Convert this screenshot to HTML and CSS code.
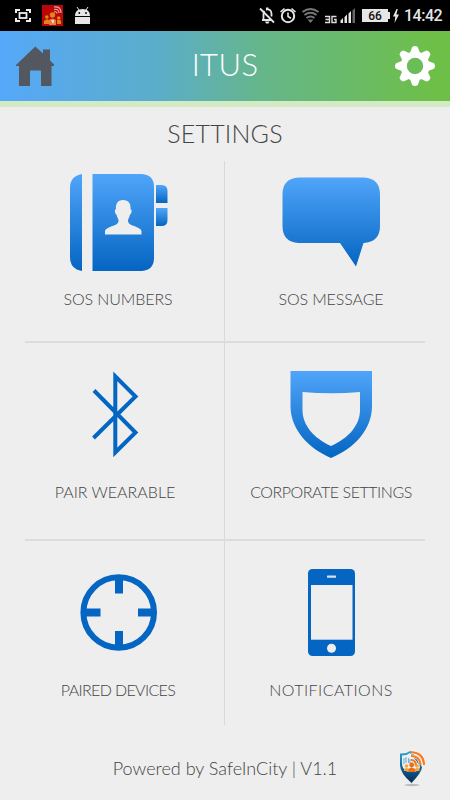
FILE: index.html
```html
<!DOCTYPE html>
<html lang="en">
<head>
    <meta charset="UTF-8">
    <meta name="viewport" content="width=device-width, initial-scale=1.0">
    <title>ITUS - Settings</title>
    <link rel="stylesheet" href="styles.css">
</head>
<body>
    <div class="statusbar">
        <svg class="notifications" width="78" height="31" viewBox="14 0 78 31">
            <path d="M16 13v-3h4M26 10h4v3M16 18v3h4M26 21h4v-3" fill="none" stroke="#eee" stroke-width="2"/>
            <rect x="19.5" y="13" width="7" height="5" fill="none" stroke="#eee" stroke-width="1.8"/>
            <rect x="42" y="5" width="21" height="21" fill="#bd0505"/>
            <g fill="#d8861d">
                <circle cx="52.5" cy="15" r="2.7"/>
                <circle cx="46.8" cy="17" r="1.8"/>
                <circle cx="58.7" cy="18" r="1.8"/>
                <path d="M44 24v-3q3-3 5-1v4zM57 24v-4q3-1 4 1v3z"/>
            </g>
            <path d="M49 25v-5q3.5-3 7 0v5z" fill="#e67b3b"/>
            <path d="M51 20l3 0v2l-1 2zM52 19.500l3 2" fill="#f8d8c8"/>
            <path d="M54 12q3-1 3 1.500M54 9.500q5-1 5 3.500M54 7q7-1 7 6" fill="none" stroke="#e9b5b5" stroke-width="1.100"/>
            <path d="M75 16q0-7 7.500-7t7.500 7zM75 17h15v7H75z" fill="#e6e6e6"/>
            <path d="M77 7l2 3M88 7l-2 3" stroke="#e6e6e6" stroke-width="1"/>
            <circle cx="79.300" cy="13" r=".9"/>
            <circle cx="86" cy="13" r=".9"/>
        </svg>
        <div class="system">
            <svg width="98" height="31" viewBox="260 0 98 31">
                <path d="M263 20h9M264.500 19v-5q0-2 1-3M267 9.500q5-1 5.500 4v3" fill="none" stroke="#e6e6e6" stroke-width="1.800"/>
                <path d="M261 8.500l14 14" stroke="#e6e6e6" stroke-width="1.800"/>
                <path d="M266 21.500h4.500l-1 2h-2.500zM267 7.500h2.500v2H267z" fill="#e6e6e6"/>
                <circle cx="289" cy="16" r="6.200" fill="none" stroke="#e6e6e6" stroke-width="2"/>
                <path d="M289 12.500v4l3 1.800M281.500 12l4-3.500M296.500 12l-4-3.500" fill="none" stroke="#e6e6e6" stroke-width="1.600"/>
                <path d="M303.500 12q8-6 16 0M305.500 15q6-4.500 12 0M307.500 18q4-3 8 0" fill="none" stroke="#777" stroke-width="2"/>
                <path d="M308.500 19.500h6l-3 3.500z" fill="#777"/>
                <path d="M326 16.500h4.500v6H326M326.500 19.500h4M337.500 16.500H333v6h4v-3h-2" fill="none" stroke="#ddd" stroke-width="1.400"/>
                <path d="M341.500 20.500l2.500-2.500v5h-2.500zM345.500 17l2.500-2.500V23h-2.500zM349.500 13.500L352 11v12h-2.500z" fill="#e6e6e6"/>
                <path d="M353.500 10.500L356 8v15h-2.500z" fill="#666"/>
            </svg>
            <span class="battery">66</span>
            <svg class="bolt" width="6" height="14" viewBox="0 0 6 14">
                <path d="M3.500 0L0 7.500h2.300L1.500 14 6 5.500H3.300L4.800 0z" fill="#e6e6e6"/>
            </svg>
            <span class="clock">14:42</span>
        </div>
    </div>

    <header>
        <svg class="home" width="40" height="40" viewBox="0 0 40 40">
            <path d="M20.300 .5l7.700 7V3.500h7v11l4 4v1.500h-2.500v20H26V24.500H15V40H4V20H1v-1z" fill="#53575f"/>
        </svg>
        <h1>ITUS</h1>
        <svg class="gear" width="40" height="40" viewBox="-20 -20 40 40">
            <g fill="#fff">
                <path id="tooth" d="M-5-13L-2.800-19Q0-21 2.800-19L5-13V13L2.800 19Q0 21-2.800 19L-5 13z"/>
                <use href="#tooth" transform="rotate(45)"/>
                <use href="#tooth" transform="rotate(90)"/>
                <use href="#tooth" transform="rotate(135)"/>
                <circle r="14.500"/>
            </g>
            <circle r="8.200" fill="#6bbd58"/>
        </svg>
    </header>

    <main>
        <h2>SETTINGS</h2>
        <div class="menu">
            <div class="item numbers">
                <svg width="100" height="100" viewBox="0 0 100 100">
                    <defs>
                        <linearGradient id="blue" x1="0" y1="0" x2="0" y2="1">
                            <stop offset="0" stop-color="#50a5f9"/>
                            <stop offset="1" stop-color="#0465c2"/>
                        </linearGradient>
                    </defs>
                    <path d="M14 1v97Q2 96 2 84V15Q2 3 14 1zM24.500 1H74q12 1 12 13v71q0 12-12 13H24.500z" fill="url(#blue)"/>
                    <path d="M88 12h5.500q6 0 6 6v12H88z" fill="url(#blue)"/>
                    <path d="M88 35h11.500v12q0 6-6 6H88z" fill="url(#blue)"/>
                    <path d="M55 27c6 0 8 4 7.500 9 2 1 1 5-.5 5.500-.5 3-2 4-2 6 0 3 2 4 6 5.500 4 1.500 7.500 3 7.500 5.500v3H37v-3c0-2.500 3.500-4 7.500-5.500s6-2.500 6-5.500c0-2-1.500-3-2-6-1.500-.5-2.500-4.500-.5-5.500-.5-5 1.500-9 7-9z" fill="#eee"/>
                </svg>
                <p>SOS NUMBERS</p>
            </div>
            <div class="item right message">
                <svg width="100" height="100" viewBox="0 0 100 100">
                    <path d="M17.500 4.500H83q16 1 16 17V53q0 16-16.500 17L75 93.500 59 70H17.500q-16-1-16-17V21.500q0-16 16-17z" fill="url(#blue)"/>
                </svg>
                <p>SOS MESSAGE</p>
            </div>
            <div class="item pair">
                <svg width="100" height="100" viewBox="0 0 100 100">
                    <path d="M26 25.500l41.500 42L47.300 87.500V11.300L67.500 31.500 25.500 73" fill="none" stroke="#0465c2" stroke-width="4"/>
                </svg>
                <p>PAIR WEARABLE</p>
            </div>
            <div class="item right corporate">
                <svg width="100" height="100" viewBox="0 0 100 100">
                    <path fill-rule="evenodd" d="M9.500 6H91v35c0 23-17 42-41 52C27 83 9.500 64 9.500 41zM21.500 27v18c0 15 11 28 28.500 36 18-8 29-21 29-36V27q-28.500 2.500-57.500 0z" fill="url(#blue)"/>
                </svg>
                <p>CORPORATE SETTINGS</p>
            </div>
            <div class="item paired">
                <svg width="100" height="100" viewBox="0 0 100 100">
                    <circle cx="50.700" cy="49.500" r="35.300" fill="none" stroke="#0465c2" stroke-width="6"/>
                    <path d="M51 13v17.500M51 68v18M14 49.500h18.500M70 49.500h18" stroke="#0465c2" stroke-width="8"/>
                </svg>
                <p>PAIRED DEVICES</p>
            </div>
            <div class="item right notify">
                <svg width="100" height="100" viewBox="0 0 100 100">
                    <rect x="27" y="6" width="47" height="87" rx="4.500" fill="#0465c2"/>
                    <rect x="30" y="22" width="41.500" height="54.700" fill="#eee"/>
                    <rect x="46" y="12.500" width="9" height="2.200" rx=".5" fill="#d5e2ef"/>
                    <circle cx="50.500" cy="85.300" r="4.500" fill="#eee"/>
                </svg>
                <p>NOTIFICATIONS</p>
            </div>
        </div>
    </main>

    <footer>
        <p>Powered by SafeInCity | V1.1</p>
        <svg class="logo" width="28" height="38" viewBox="0 0 28 38">
            <defs>
                <linearGradient id="pin" x1="0" y1="0" x2="0" y2="1">
                    <stop offset="0" stop-color="#35a3d4"/>
                    <stop offset=".6" stop-color="#10588f"/>
                    <stop offset="1" stop-color="#052c55"/>
                </linearGradient>
            </defs>
            <ellipse cx="13" cy="35" rx="7.500" ry="1.200" fill="#bbb"/>
            <path d="M1 3.500Q7 4 11 1l3 2 9 14q0 5-10.500 16Q1 23 1 15z" fill="url(#pin)"/>
            <path d="M3 5.500q5 0 8-2.500l10 13q0 4-4 5.500H8Q3 19 3 13z" fill="#edf3f5"/>
            <path d="M5 8v6M7 7v6M9.500 8v5M11 9v5" stroke="#78b7d4" stroke-width="1.200"/>
            <path d="M12 10q5 0 5 6M12 6q9 0 9.500 9M12 2q13 1 13 13" fill="none" stroke="#fff" stroke-width="3.200"/>
            <path d="M12 10q5 0 5 6M12 6q9 0 9.500 9M12 2q13 1 13 13" fill="none" stroke="#f77b20" stroke-width="2.200"/>
            <g fill="#f8a530">
                <circle cx="7.500" cy="16" r="1.800"/>
                <circle cx="18" cy="16" r="1.800"/>
                <path d="M5 21v-2q2.500-2 5 0v2zM15.500 21v-2q2.500-2 5 0v2z"/>
            </g>
            <circle cx="12.700" cy="15" r="2.400" fill="#ef6b1a"/>
            <path d="M9.500 22v-3q3-3 6.500 0v3z" fill="#ef6b1a"/>
        </svg>
    </footer>
</body>
</html>
```
FILE: styles.css
```css
body {
    margin: 0;
    height: 800px;
    display: flex;
    flex-direction: column;
    background-color: #eee;
    color: #444;
    font-family: Lato, "Open Sans", sans-serif;
    font-weight: 300;
    overflow: hidden;
}
h1, h2, p {
    margin: 0;
    font-weight: 300;
    white-space: nowrap;
}
svg {
    display: block;
    flex-shrink: 0;
}
.statusbar {
    height: 31px;
    display: flex;
    justify-content: space-between;
    padding: 0 7px 0 14px;
    background-color: #000;
    color: #e6e6e6;
    font-family: Roboto, sans-serif;
}
.system {
    display: flex;
    align-items: center;
}
.battery {
    position: relative;
    width: 26px;
    height: 13px;
    margin-left: 5px;
    background-color: #e6e6e6;
    color: #111;
    font-size: 12px;
    font-weight: 500;
    line-height: 14px;
    text-align: center;
}
.battery::after {
    content: "";
    position: absolute;
    left: 26px;
    top: 3px;
    width: 2px;
    height: 7px;
    background-color: #e6e6e6;
}
.bolt {
    margin: 0 5px 0 5px;
}
.clock {
    width: 39px;
    font-size: 16px;
    font-weight: 500;
    line-height: 32px;
    letter-spacing: -0.5px;
}
header {
    height: 70px;
    display: flex;
    align-items: center;
    justify-content: space-between;
    padding: 0 15px;
    background: linear-gradient(to right, #55a8f8, #5badca 35%, #65b68b 58%, #6ebf48 96%);
    border-bottom: 6px solid #d3eac4;
}
h1 {
    color: #fff;
    font-size: 31px;
    line-height: 66px;
    height: 70px;
    letter-spacing: 0.4px;
}
h2 {
    height: 54px;
    font-size: 25px;
    line-height: 52px;
    letter-spacing: 0.2px;
    text-align: center;
}
.menu {
    display: grid;
    grid-template-columns: 200px 200px;
    grid-template-rows: 182px 198px 184px;
    margin-left: 25px;
}
.item {
    box-sizing: border-box;
    display: flex;
    flex-direction: column;
    align-items: center;
    padding: 22px 13px 0 0;
    border-right: 1px solid #d9d9d9;
    border-bottom: 2px solid #dcdcdc;
}
.item.right {
    padding: 22px 0 0 12px;
    border-right: none;
}
.item:nth-child(-n+2) {
    padding-top: 12px;
}
.item:nth-last-child(-n+2) {
    border-bottom: none;
}
.item p {
    margin-top: 15px;
    font-size: 16px;
    line-height: 24px;
}
.item.numbers p,
.item.message p {
    margin-top: 14px;
    letter-spacing: -0.1px;
}
.pair p {
    margin-right: 6px;
}
.corporate p {
    letter-spacing: -0.45px;
}
.paired p {
    letter-spacing: -0.65px;
}
.notify p {
    letter-spacing: 0.45px;
}
footer {
    position: relative;
    height: 75px;
}
footer p {
    font-size: 18px;
    line-height: 86px;
    text-align: center;
}
.logo {
    position: absolute;
    left: 399px;
    top: 25px;
}
```
